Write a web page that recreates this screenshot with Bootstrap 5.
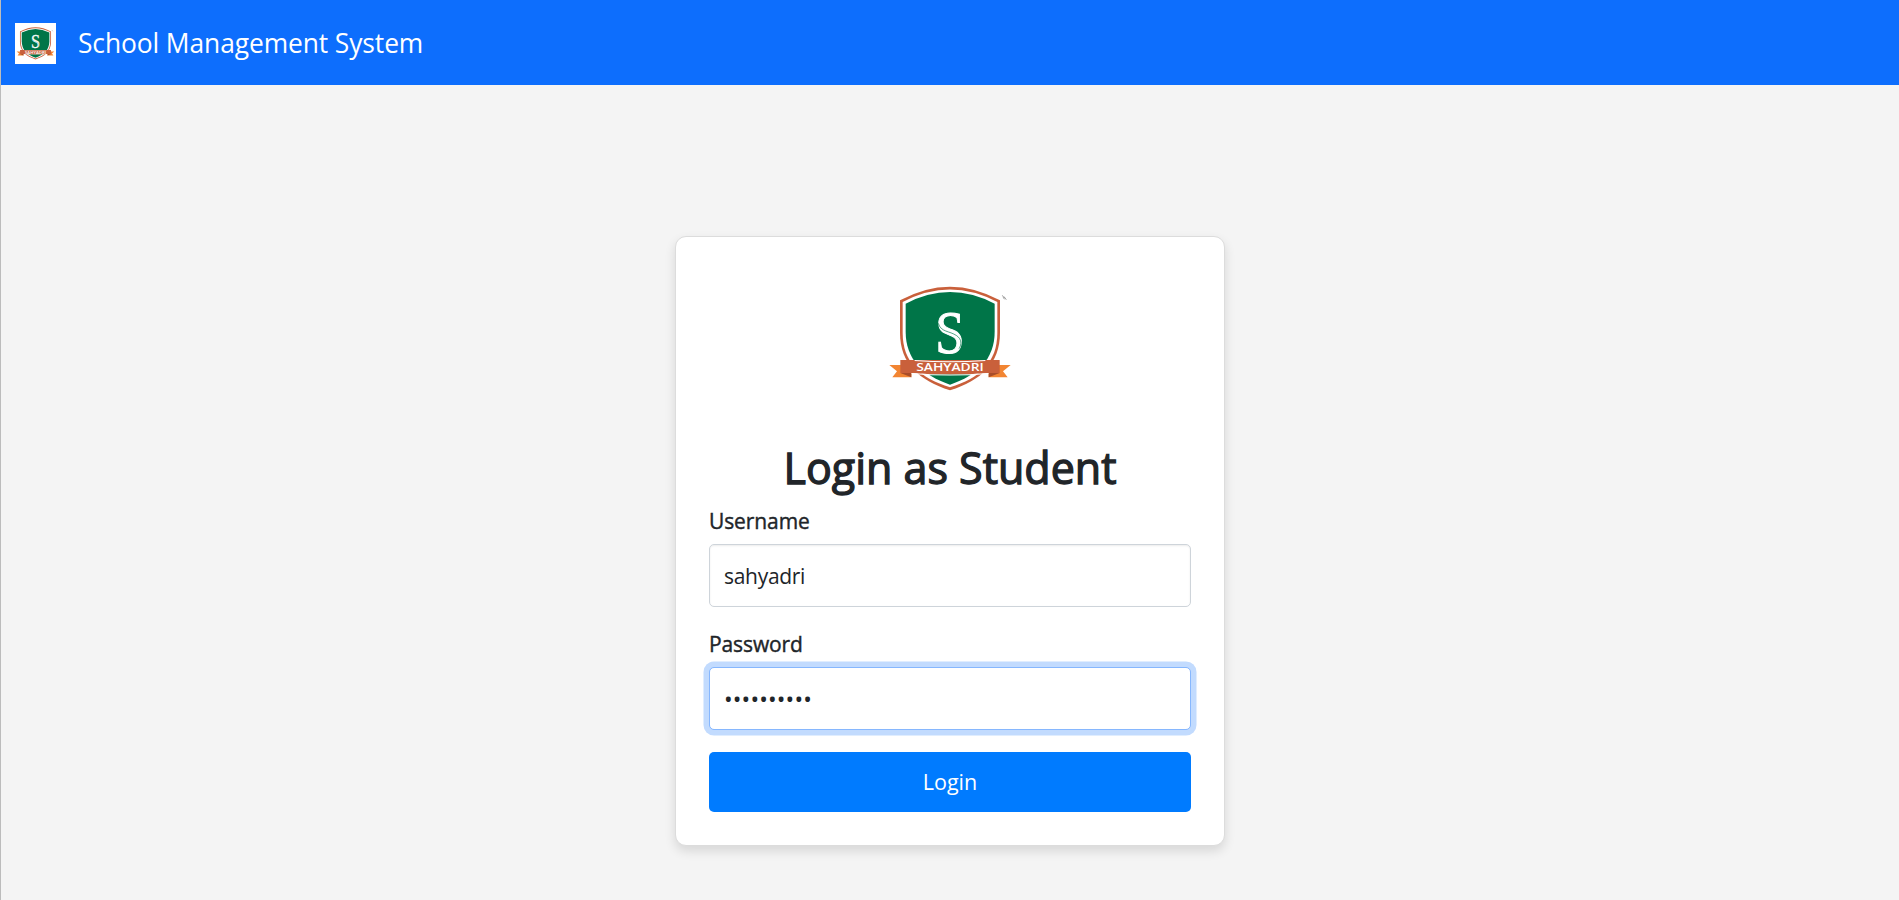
<!DOCTYPE html>
<html lang="en">
<head>
<meta charset="utf-8">
<meta name="viewport" content="width=device-width, initial-scale=1">
<title>School Management System</title>
<link href="https://cdn.jsdelivr.net/npm/bootstrap@5.3.0/dist/css/bootstrap.min.css" rel="stylesheet">
<style>
  html { font-size: 22px; }
  body { font-family: "Open Sans", "Noto Sans", sans-serif; background: #f4f4f4; border-left: 1px solid #bcbcbc; min-height: 900px; overflow: hidden; }
  .topbar { height: 85px; padding: 1px 14px 0; }
  .topbar .crest { width: 41px; height: 41px; background: #fff; }
  .site-name { font-size: 26.4px; line-height: 40px; margin-left: 22px; letter-spacing: -.1px; }
  .login-card { width: 550px; height: 610px; margin: 151px auto 0; padding: 36px 33px 0; border: 1px solid #dcdcdc; border-radius: 11px; box-shadow: 0 5px 11px rgba(0,0,0,.12); }
  .login-card .crest { width: 132px; height: 132px; margin-left: -1px; }
  .login-title { font-size: 43px; line-height: 53px; font-weight: 400; -webkit-text-stroke: 1.3px; margin: 36px 0 11px; }
  .field-group { margin-bottom: 21px; }
  .field-group + .field-group { margin-bottom: 22px; }
  .field-label { font-size: 21px; line-height: 33px; -webkit-text-stroke: .4px; margin-bottom: 6px; letter-spacing: -.1px; }
  .field-input { height: 63px; padding: 0 14px; font-size: 21px; letter-spacing: -.3px; border-color: #ced4da; border-radius: 5px; box-shadow: inset 0 1px 2px rgba(0,0,0,.075); }
  .field-active { font-size: 23px; letter-spacing: .15px; border-color: #86b7fe; box-shadow: 0 0 0 5.5px #c2dbfe; }
  .btn-login { height: 60px; font-size: 21.5px; border-radius: 5px; background: #007bff; color: #fff; border: 0; }
</style>
</head>
<body>
<nav class="topbar bg-primary d-flex align-items-center">
  <svg class="crest flex-shrink-0" viewBox="42 9 396 396"><use href="#crest"/></svg>
  <span class="site-name text-white">School Management System</span>
</nav>
<main class="login-card bg-white">
  <div class="text-center lh-1">
    <svg class="crest d-inline-block align-top" viewBox="42 9 396 396">
      <g id="crest">
        <path d="M90 91Q240 9 390 91V188C390 282 332 330 240 361C148 330 90 282 90 188Z" fill="#c9603b"/>
        <path d="M98 96Q240 21 382 96V188C382 278 328 324 240 352C152 324 98 278 98 188Z" fill="#fff"/>
        <path d="M107 101Q240 31 374 101V185C374 268 322 315 240 344C158 315 107 268 107 185Z" fill="#007548"/>
        <path d="M58 285H124V322H67L81 304ZM422 285H356V322H413L399 304Z" fill="#f28532"/>
        <path d="M91 309H124V322ZM389 309H356V322Z" fill="#a94d29"/>
        <path d="M91 270H389V309H355Q240 318 125 309H91Z" fill="#c9603b"/>
        <path d="M134 270Q240 278 346 270V273Q240 281 134 273ZM125 309Q240 318 355 309V312Q240 321 125 312Z" fill="#fff"/>
        <text x="240" y="248" text-anchor="middle" font-family="Liberation Serif, serif" font-size="184" textLength="88" lengthAdjust="spacingAndGlyphs" fill="#fff" stroke="#fff" stroke-width="3">S</text>
        <path d="M205 160C213 187 238 182 260 197C276 208 275 224 267 236" fill="none" stroke="#007548" stroke-width="2"/>
        <text x="240" y="304" text-anchor="middle" font-family="Open Sans, sans-serif" font-size="33" font-weight="600" textLength="203" lengthAdjust="spacingAndGlyphs" fill="#fff">SAHYADRI</text>
        <path d="M397 76L401 82M400 82Q404 79 405 84L409 89M400 83L404 88" fill="none" stroke="#555" stroke-width="1.7"/>
      </g>
    </svg>
  </div>
  <h2 class="login-title text-center">Login as Student</h2>
  <form>
    <div class="field-group">
      <label class="field-label d-block" for="username">Username</label>
      <input class="form-control field-input" id="username" type="text" value="sahyadri">
    </div>
    <div class="field-group">
      <label class="field-label d-block" for="password">Password</label>
      <input class="form-control field-input field-active" id="password" type="password" value="sahyadri12">
    </div>
    <button class="btn btn-login w-100" type="button">Login</button>
  </form>
</main>
<script src="https://cdn.jsdelivr.net/npm/bootstrap@5.3.0/dist/js/bootstrap.bundle.min.js"></script>
</body>
</html>
